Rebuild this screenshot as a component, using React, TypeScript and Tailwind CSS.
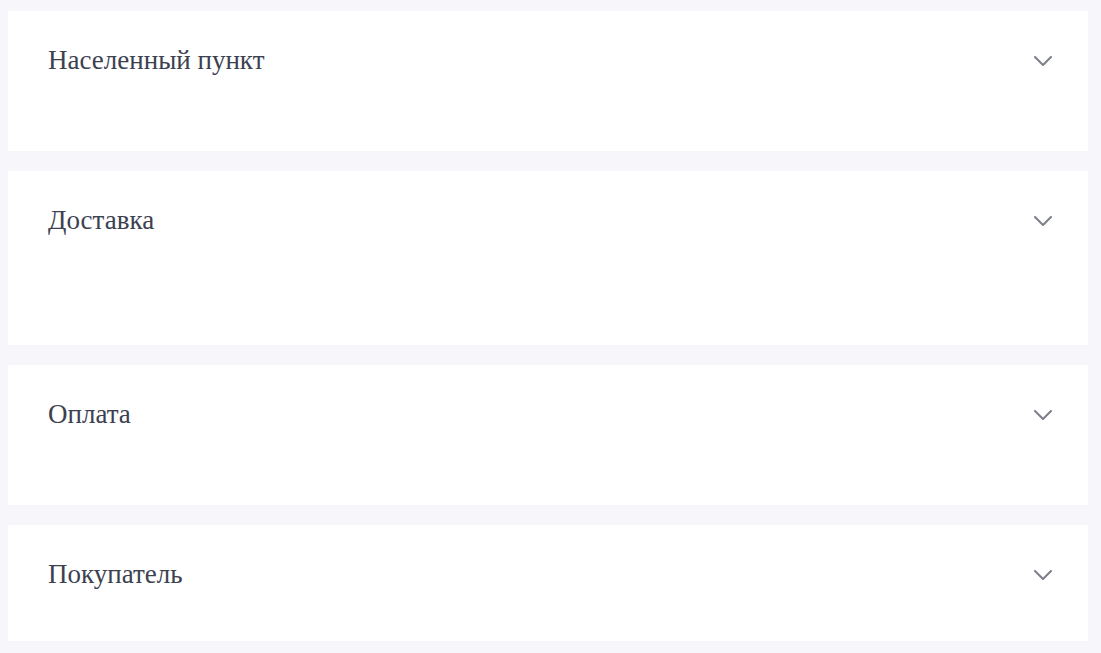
import React from 'react';

const sections = [
  { title: 'Населенный пункт', height: 'h-[140px]' },
  { title: 'Доставка', height: 'h-[174px]' },
  { title: 'Оплата', height: 'h-[140px]' },
  { title: 'Покупатель', height: 'h-[116px]' },
];

const Chevron: React.FC = () => (
  <svg width="18" height="10" viewBox="0 0 18 10" fill="none" className="text-[#7c7f88]">
    <path d="M1 1 L9 9 L17 1" stroke="currentColor" strokeWidth="2" strokeLinecap="round" strokeLinejoin="round" />
  </svg>
);

const App: React.FC = () => {
  return (
    <div className="min-h-[653px] bg-[#f7f7fb] pl-2 pr-[13px] pt-[11px] pb-3 flex flex-col gap-5">
      {sections.map((s) => (
        <div key={s.title} className={`bg-white ${s.height} pl-10 pr-[36px] pt-[36px]`}>
          <div className="flex items-center justify-between h-[27px]">
            <span className="text-[27px] text-[#3c4150] font-['Liberation_Serif',serif] leading-none">{s.title}</span>
            <Chevron />
          </div>
        </div>
      ))}
    </div>
  );
};

export default App;
